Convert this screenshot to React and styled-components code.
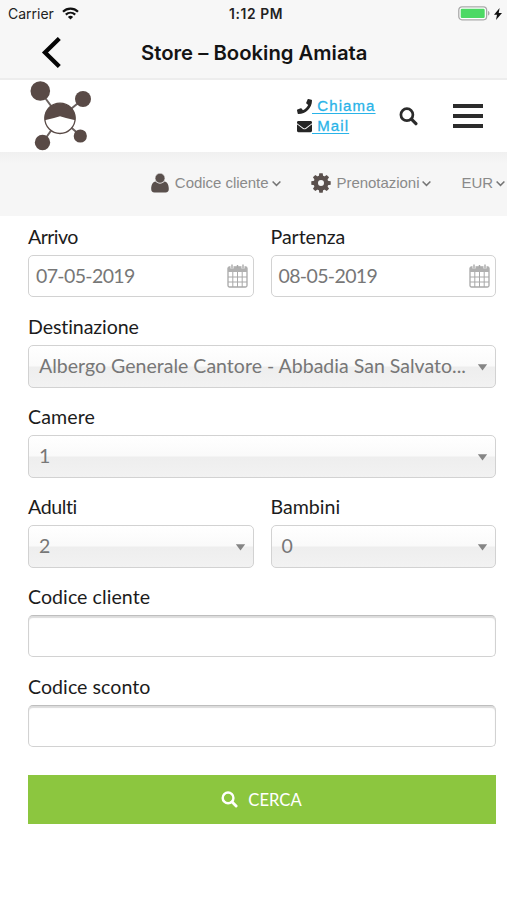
import React from 'react';
import styled, { createGlobalStyle } from 'styled-components';
import { FaPhone, FaEnvelope } from 'react-icons/fa';

const GlobalStyle = createGlobalStyle`
  * { box-sizing: border-box; }
  body { margin: 0; background: #fff; }
`;

const Page = styled.div`
  width: 507px;
  height: 900px;
  overflow: hidden;
  background: #fff;
  font-family: Lato, sans-serif;
  font-variant-ligatures: none;
`;

const AppBar = styled.div`
  height: 80px;
  background: #f7f7f7;
  border-bottom: 2px solid #ededed;
  font-family: Inter, sans-serif;
`;

const StatusBar = styled.div`
  display: grid;
  grid-template-columns: 1fr auto 1fr;
  align-items: center;
  height: 27px;
  padding: 0 5px 0 8px;
  font-size: 14px;
`;

const Carrier = styled.div`
  display: flex;
  align-items: center;
  gap: 8px;
  color: #222;
`;

const Clock = styled.div`
  padding-left: 2px;
  font-weight: 600;
  font-size: 13.8px;
  letter-spacing: 0.6px;
  color: #222;
`;

const Power = styled.div`
  display: flex;
  align-items: center;
  justify-content: flex-end;
  gap: 4px;
`;

const TitleBar = styled.div`
  display: grid;
  grid-template-columns: 141px 1fr;
  align-items: center;
  height: 51px;
`;

const BackButton = styled.button`
  display: flex;
  padding: 0 0 0 41px;
  border: 0;
  background: none;
`;

const Title = styled.h1`
  margin: 0;
  font-size: 20.3px;
  font-weight: 600;
  line-height: 24px;
  white-space: nowrap;
  color: #141414;
`;

const SiteHeader = styled.header`
  display: flex;
  align-items: center;
  height: 72px;
  padding: 0 24px 0 28px;
`;

const Contacts = styled.div`
  display: flex;
  flex-direction: column;
  width: 82px;
  margin-left: auto;
  margin-right: 20px;
  color: #262626;
`;

const ContactLine = styled.div`
  display: flex;
  align-items: center;
  height: 20px;
`;

const ContactLink = styled.a`
  font: 400 15px/20px 'Liberation Sans', sans-serif;
  letter-spacing: 1.1px;
  white-space: pre;
  color: #29b3e8;
  -webkit-text-stroke: 0.3px #29b3e8;
  text-decoration: underline;
  text-underline-offset: 2px;
`;

const HeaderSearch = styled.div`
  display: flex;
  color: #2b2b2b;
`;

const Burger = styled.div`
  display: flex;
  flex-direction: column;
  gap: 6px;
  width: 30px;
  margin-left: 35px;
`;

const BurgerLine = styled.span`
  height: 4px;
  background: #2b2b2b;
`;

const AccountNav = styled.nav`
  display: flex;
  align-items: center;
  justify-content: flex-end;
  height: 64px;
  padding: 0 2px 0 0;
  background: linear-gradient(#f0f0f0, #f6f6f6 12px);
`;

const NavItem = styled.div`
  display: flex;
  align-items: center;
  gap: 3px;
  height: 20px;
  margin: 0 0 2px 30px;
  font: 15px/20px 'Liberation Sans', sans-serif;
  letter-spacing: -0.04px;
  color: #8a8a8a;
`;

const NavIcon = styled.span`
  display: flex;
  margin-right: 3px;
  color: #5a504d;
`;

const Form = styled.form`
  display: flex;
  flex-direction: column;
  padding: 9px 11px 0 28px;
`;

const FieldRow = styled.div`
  display: grid;
  grid-template-columns: ${(p) => (p.$split ? '1fr 1fr' : '1fr')};
  column-gap: 17px;
  height: 90px;
`;

const Field = styled.div`
  min-width: 0;
`;

const Label = styled.label`
  display: block;
  padding-top: 0.5px;
  margin-bottom: 8.5px;
  font-size: 19.6px;
  line-height: 21px;
  letter-spacing: ${(p) => p.$track || 0}px;
  color: #1c1c1c;
`;

const Control = styled.div`
  display: flex;
  align-items: center;
  justify-content: space-between;
  border: 1.5px solid #d2d2d2;
  border-radius: 5px;
  font-size: 19.5px;
  line-height: 24px;
  color: #777;
`;

const DateBox = styled(Control)`
  height: 42px;
  padding: 0 5px 1px 7px;
  letter-spacing: -0.63px;
`;

const SelectBox = styled(Control)`
  height: 42.5px;
  padding: 0 7px 0 10px;
  background: linear-gradient(#fff 0%, #fafafa 48%, #eeeeee 52%, #f2f2f2 100%);
  white-space: nowrap;
`;

const SelectValue = styled.span`
  padding-bottom: 1px;
  letter-spacing: 0.02px;
`;

const InputBox = styled(Control)`
  height: 42px;
  border-top-color: #bebebe;
  box-shadow: inset 0 2px 1px #dcdcdc;
`;

const SearchButton = styled.button`
  display: flex;
  align-items: center;
  justify-content: center;
  gap: 10px;
  height: 49px;
  margin-top: 10px;
  padding: 0 1px 0 0;
  border: 0;
  background: #8cc63f;
  color: #fff;
  font: 16.6px/20px Lato, sans-serif;
`;

const Wifi = () => (
  <svg width="17" height="13" viewBox="0 0 17 13" fill="none" stroke="#111" strokeWidth="2.2">
    <path d="M1 4.7C5.2.6 11.8.6 16 4.7" />
    <path d="M3.8 7.6c2.7-2.5 6.7-2.5 9.4 0" />
    <path d="M5.9 9.9c1.5-1.4 3.7-1.4 5.2 0L8.5 12.6z" fill="#111" stroke="none" />
  </svg>
);

const Battery = () => (
  <svg width="32" height="15" viewBox="0 0 32 15">
    <rect x=".8" y=".8" width="27.8" height="13" rx="3.2" fill="#fff" stroke="#a9a9a9" strokeWidth="1.3" />
    <rect x="2.7" y="2.7" width="24" height="9.2" rx="1.2" fill="#4cd964" />
    <path d="M30 5c2 .6 2 4 0 4.6z" fill="#a9a9a9" />
  </svg>
);

const Bolt = () => (
  <svg width="8" height="12" viewBox="0 0 8 12" fill="#111">
    <path d="M5.6 0L0 6.7h3L2 12l6-7H4.7z" />
  </svg>
);

const BackArrow = () => (
  <svg width="21" height="31" viewBox="0 0 21 31" fill="none" stroke="#050505" strokeWidth="4.3">
    <path d="M18.3 1.5L4 15.5l14.3 14" />
  </svg>
);

const Logo = () => (
  <svg width="66" height="72" viewBox="0 0 66 72">
    <path d="M12 11L32 38L55 19M15 62L32 38L53 56" stroke="#6b6260" strokeWidth="2" fill="none" />
    <g fill="#594a46">
      <circle cx="12.3" cy="11" r="9.8" />
      <circle cx="55" cy="19" r="8" />
      <circle cx="14.5" cy="62.5" r="7.7" />
      <circle cx="52.3" cy="56" r="6.6" />
    </g>
    <circle cx="32" cy="38.3" r="15.2" fill="#fff" stroke="#594a46" strokeWidth="1.3" />
    <path d="M16.7 40.3a15.4 15.4 0 1 1 30.6 0Q39 38.6 32 36.3Q25 38.6 16.7 40.3z" fill="#594a46" />
  </svg>
);

const Search = ({ size }) => (
  <svg width={size} height={size} viewBox="0 0 19 19" fill="none" stroke="currentColor">
    <circle cx="7.9" cy="7.7" r="6" strokeWidth="2.7" />
    <path d="M12.4 12.2l4.5 4.5" strokeWidth="3.2" strokeLinecap="round" />
  </svg>
);

const User = () => (
  <svg width="18" height="20" viewBox="0 0 18 20" fill="currentColor">
    <path d="M4.6 8.5C6 11 12 11 13.4 8.5C16.5 9 17.8 12 17.8 16C17.8 18.3 16.8 19.5 14.5 19.5H3.5C1.2 19.5.2 18.3.2 16C.2 12 1.5 9 4.6 8.5z" />
    <circle cx="9" cy="5.2" r="4.9" stroke="#f6f6f6" strokeWidth=".5" />
  </svg>
);

const TEETH = [0, 45, 90, 135, 180, 225, 270, 315];

const Cog = () => (
  <svg width="20" height="20" viewBox="-10 -10 20 20">
    <circle r="5.2" fill="none" stroke="currentColor" strokeWidth="4.4" />
    {TEETH.map((angle) => (
      <path key={angle} d="M-2.2-6.5L-1.7-9.7H1.7L2.2-6.5z" fill="currentColor" transform={`rotate(${angle})`} />
    ))}
  </svg>
);

const Chevron = () => (
  <svg width="9" height="7" viewBox="0 0 9 7" fill="none" stroke="#757575" strokeWidth="1.5">
    <path d="M.6 1.5l3.9 3.9 3.9-3.9" />
  </svg>
);

const Caret = () => (
  <svg width="11" height="9" viewBox="0 0 11 9">
    <path d="M.8 2.3h9.4L5.5 8.5z" fill="#858585" />
  </svg>
);

const Calendar = () => (
  <svg width="21" height="24" viewBox="0 0 21 24" fill="none" stroke="#a9a9a9">
    <rect x="1" y="3" width="19" height="20" rx="1.5" strokeWidth="1.3" />
    <path d="M1 3h19v5H1z" fill="#b0b0b0" stroke="none" />
    <path d="M1 13h19M1 18h19M5.8 8v15M10.5 8v15M15.2 8v15" />
    <path d="M5 1v3.5M16 1v3.5" stroke="#fff" strokeWidth="3" />
    <path d="M5 .5v4M16 .5v4M10.5 1v3" strokeWidth="1.4" />
  </svg>
);

const DateField = ({ label, track, value }) => (
  <Field>
    <Label $track={track}>{label}</Label>
    <DateBox>{value}<Calendar /></DateBox>
  </Field>
);

const SelectField = ({ label, track, value }) => (
  <Field>
    <Label $track={track}>{label}</Label>
    <SelectBox><SelectValue>{value}</SelectValue><Caret /></SelectBox>
  </Field>
);

const TextField = ({ label }) => (
  <Field>
    <Label $track={0.05}>{label}</Label>
    <InputBox />
  </Field>
);

export default function App() {
  return (
    <Page>
      <GlobalStyle />
      <AppBar>
        <StatusBar>
          <Carrier>Carrier <Wifi /></Carrier>
          <Clock>1:12 PM</Clock>
          <Power><Battery /><Bolt /></Power>
        </StatusBar>
        <TitleBar>
          <BackButton type="button"><BackArrow /></BackButton>
          <Title>Store – Booking Amiata</Title>
        </TitleBar>
      </AppBar>
      <SiteHeader>
        <Logo />
        <Contacts>
          <ContactLine><FaPhone size={15} /><ContactLink> Chiama</ContactLink></ContactLine>
          <ContactLine><FaEnvelope size={15} /><ContactLink> Mail</ContactLink></ContactLine>
        </Contacts>
        <HeaderSearch><Search size={19} /></HeaderSearch>
        <Burger><BurgerLine /><BurgerLine /><BurgerLine /></Burger>
      </SiteHeader>
      <AccountNav>
        <NavItem><NavIcon><User /></NavIcon>Codice cliente<Chevron /></NavItem>
        <NavItem><NavIcon><Cog /></NavIcon>Prenotazioni<Chevron /></NavItem>
        <NavItem>EUR<Chevron /></NavItem>
      </AccountNav>
      <Form>
        <FieldRow $split>
          <DateField label="Arrivo" track={-0.55} value="07-05-2019" />
          <DateField label="Partenza" track={-0.05} value="08-05-2019" />
        </FieldRow>
        <FieldRow>
          <SelectField label="Destinazione" track={-0.1} value="Albergo Generale Cantore - Abbadia San Salvato..." />
        </FieldRow>
        <FieldRow>
          <SelectField label="Camere" track={0.1} value="1" />
        </FieldRow>
        <FieldRow $split>
          <SelectField label="Adulti" track={-0.4} value="2" />
          <SelectField label="Bambini" track={0} value="0" />
        </FieldRow>
        <FieldRow><TextField label="Codice cliente" /></FieldRow>
        <FieldRow><TextField label="Codice sconto" /></FieldRow>
        <SearchButton type="button"><Search size={17} />CERCA</SearchButton>
      </Form>
    </Page>
  );
}
